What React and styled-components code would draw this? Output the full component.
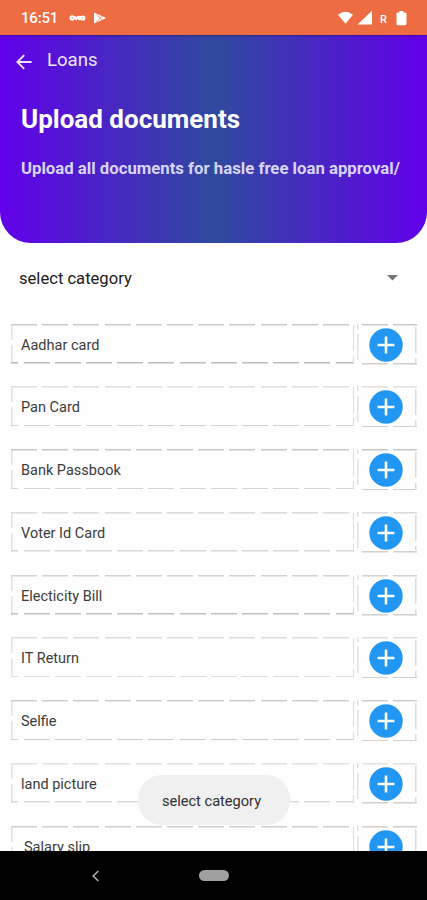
import React from 'react';
import styled, { createGlobalStyle, css } from 'styled-components';

const colors = {
  orange: '#ed6c41',
  purple: '#6200ea',
  teal: '#2f4a9e',
  blue: '#2196f3',
  white: '#ffffff',
  page: '#fefefe',
  toast: '#f0f0f0',
};

const documents = [
  { name: 'Aadhar card', top: '#cacaca', bottom: '#bcbcbc' },
  { name: 'Pan Card', top: '#dedede', bottom: '#d2d2d2' },
  { name: 'Bank Passbook', top: '#c6c6c6', bottom: '#d4d4d4' },
  { name: 'Voter Id Card', top: '#dadada', bottom: '#d6d6d6' },
  { name: 'Electicity Bill', top: '#d2d2d2', bottom: '#c2c2c2' },
  { name: 'IT Return', top: '#dcdcdc', bottom: '#dedede' },
  { name: 'Selfie', top: '#cecece', bottom: '#cccccc' },
  { name: 'land picture', top: '#e2e2e2', bottom: '#dadada' },
  { name: 'Salary slip', top: '#cecece', bottom: '#cccccc', indent: true },
];

const GlobalStyle = createGlobalStyle`
  body {
    margin: 0;
    background: ${colors.page};
    font-family: Roboto, "Liberation Sans", sans-serif;
  }
  * {
    box-sizing: border-box;
  }
`;

const Screen = styled.div`
  position: relative;
  display: flex;
  flex-direction: column;
  width: 427px;
  height: 900px;
  overflow: hidden;
`;

const StatusBar = styled.div`
  display: flex;
  flex: none;
  align-items: center;
  justify-content: space-between;
  height: 35px;
  padding: 1px 20px 0 21px;
  background: ${colors.orange};
  color: ${colors.white};
`;

const StatusGroup = styled.div`
  display: flex;
  align-items: center;
`;

const Clock = styled.span`
  width: 48px;
  font-size: 15px;
  font-weight: 500;
  letter-spacing: -0.2px;
`;

const Roaming = styled.span`
  width: 16px;
  margin: 2px 0 0 8px;
  font-size: 11px;
  font-weight: 500;
`;

const Header = styled.header`
  flex: none;
  height: 207.5px;
  border-radius: 0 0 31px 31px;
  background: linear-gradient(to right, ${colors.purple}, ${colors.teal} 50%, ${colors.purple});
  box-shadow: inset 0 2px 2px -1px rgba(0, 0, 60, 0.35);
  color: ${colors.white};
`;

const TitleBar = styled.div`
  display: flex;
  align-items: center;
  height: 50px;
  padding: 4px 0 0 16px;
`;

const PageName = styled.span`
  margin: -5px 0 0 15px;
  font-size: 18.6px;
  line-height: 24px;
  color: #eee6ff;
`;

const Heading = styled.h1`
  margin: 17.5px 0 0 21px;
  font-size: 26px;
  line-height: 32px;
  font-weight: 700;
  white-space: nowrap;
`;

const SubHeading = styled.p`
  margin: 22.5px 0 0 21px;
  font-size: 16.74px;
  line-height: 22px;
  font-weight: 700;
  white-space: nowrap;
  color: #d9d5f8;
`;

const Select = styled.div`
  display: flex;
  flex: none;
  align-items: center;
  justify-content: space-between;
  height: 72px;
  padding: 0 29px 0 19px;
  font-size: 16.6px;
  color: #202020;
`;

const DropdownArrow = styled.svg`
  margin-bottom: 2px;
`;

const DocumentList = styled.div`
  display: flex;
  flex: 1;
  flex-direction: column;
  gap: 21.75px;
  min-height: 0;
  padding: 9px 10px 0 11px;
  overflow: hidden;
`;

const Row = styled.div`
  display: flex;
  flex: none;
  gap: 2.5px;
  height: 41px;
`;

const dash = (direction, color, shift) =>
  `repeating-linear-gradient(${direction}, ${color} ${shift}px, ${color} ${shift + 26}px, transparent ${shift + 26}px, transparent ${shift + 31.2}px)`;

const dashedFrame = css`
  background-image:
    ${p => dash('to right', p.$top, p.$shifts[0])},
    ${p => dash('to bottom', '#dcdcdc', p.$shifts[1])},
    ${p => dash('to left', p.$bottom, p.$shifts[2])},
    ${p => dash('to top', '#e2e2e2', p.$shifts[3])};
  background-size: 100% 1.5px, 1.5px 100%, 100% 1.5px, 1.5px 100%;
  background-position: 0 0, 100% 0, 0 100%, 0 0;
  background-repeat: no-repeat;
`;

const DocumentName = styled.div`
  display: flex;
  align-items: center;
  width: 343px;
  height: 40px;
  padding: 3px 0 0 ${p => (p.$indent ? '13px' : '10px')};
  font-size: 14.5px;
  color: #3c3c3c;
  ${dashedFrame}
`;

const AddButton = styled.div`
  display: flex;
  align-items: center;
  justify-content: center;
  width: 60px;
  height: 41px;
  padding: 1px 1px 0 0;
  ${dashedFrame}
`;

const Toast = styled.div`
  position: absolute;
  left: 138px;
  top: 775px;
  display: flex;
  align-items: center;
  justify-content: center;
  width: 152px;
  height: 50px;
  padding: 2px 5px 0 0;
  border-radius: 24px;
  background: ${colors.toast};
  font-size: 14.6px;
  color: #303030;
`;

const NavigationBar = styled.div`
  display: flex;
  flex: none;
  align-items: center;
  height: 49px;
  padding-left: 91px;
  background: #000;
`;

const HomePill = styled.div`
  width: 30px;
  height: 11px;
  margin-left: 99px;
  border-radius: 6px;
  background: #a0a0a0;
`;

const NotificationIcons = () => (
  <svg width="40" height="14" viewBox="0 0 40 14">
    <g fill="none" stroke="#fff" strokeWidth="2">
      <circle cx="3.2" cy="7" r="1.7" />
      <path d="M5.4 5.4 7.2 8 9 5.4" />
      <circle cx="10.6" cy="7" r="1.3" />
      <circle cx="13.8" cy="7" r="1.6" />
    </g>
    <path d="M25 1.6 37.3 7 25 12.6z" fill="#fff" />
    <path d="M27.5 3.5 33.1 9M27.5 11 33.1 5.2" stroke={colors.orange} strokeWidth="0.7" />
  </svg>
);

const SignalIcons = () => (
  <svg width="37" height="16" viewBox="0 0 37 16">
    <path d="M3 4.7Q10.5 -1.2 18 4.7L10.5 13.7z" fill="#fff" />
    <path d="M22.5 14.5 37 .8v13.7z" fill="#fff" />
  </svg>
);

const BatteryIcon = () => (
  <svg width="11" height="15" viewBox="0 0 11 15">
    <path d="M3.3 0h4v1.5H9.5Q10.5 1.5 10.5 2.5V13Q10.5 14.3 9.3 14.3H1.7Q.5 14.3 .5 13V2.5Q.5 1.5 1.5 1.5H3.3z" fill="#fff" />
  </svg>
);

const BackArrow = () => (
  <svg width="16" height="16" viewBox="0 0 16 16" fill="none" stroke="#eee6ff" strokeWidth="1.9">
    <path d="M15.6 8H1.5M8.2 1.2 1.4 8l6.8 6.8" />
  </svg>
);

const PlusIcon = () => (
  <svg width="34" height="34" viewBox="0 0 34 34">
    <circle cx="17" cy="17" r="16.7" fill={colors.blue} />
    <path d="M8.6 17h16.8M17 8.6v16.8" stroke="#fff" strokeWidth="2.6" />
  </svg>
);

const DocumentRow = ({ name, top, bottom, indent }) => (
  <Row>
    <DocumentName $top={top} $bottom={bottom} $indent={indent} $shifts={[0, 0.7, -7.6, -6.9]}>
      {name}
    </DocumentName>
    <AddButton $top={top} $bottom="#d0d0d0" $shifts={[5, 3, -2, 5]}>
      <PlusIcon />
    </AddButton>
  </Row>
);

const App = () => {
  return (
    <Screen>
      <GlobalStyle />
      <StatusBar>
        <StatusGroup>
          <Clock>16:51</Clock>
          <NotificationIcons />
        </StatusGroup>
        <StatusGroup>
          <SignalIcons />
          <Roaming>R</Roaming>
          <BatteryIcon />
        </StatusGroup>
      </StatusBar>

      <Header>
        <TitleBar>
          <BackArrow />
          <PageName>Loans</PageName>
        </TitleBar>
        <Heading>Upload documents</Heading>
        <SubHeading>Upload all documents for hasle free loan approval/</SubHeading>
      </Header>

      <Select>
        select category
        <DropdownArrow width="11" height="6" viewBox="0 0 11 6">
          <path d="M0 0h11L5.5 5.6z" fill="#777" />
        </DropdownArrow>
      </Select>

      <DocumentList>
        {documents.map(doc => (
          <DocumentRow key={doc.name} {...doc} />
        ))}
      </DocumentList>

      <Toast>select category</Toast>

      <NavigationBar>
        <svg width="9" height="12" viewBox="0 0 9 12" fill="none" stroke="#aaa" strokeWidth="1.7">
          <path d="M7.4 1 2.2 6l5.2 5" />
        </svg>
        <HomePill />
      </NavigationBar>
    </Screen>
  );
};

export default App;
